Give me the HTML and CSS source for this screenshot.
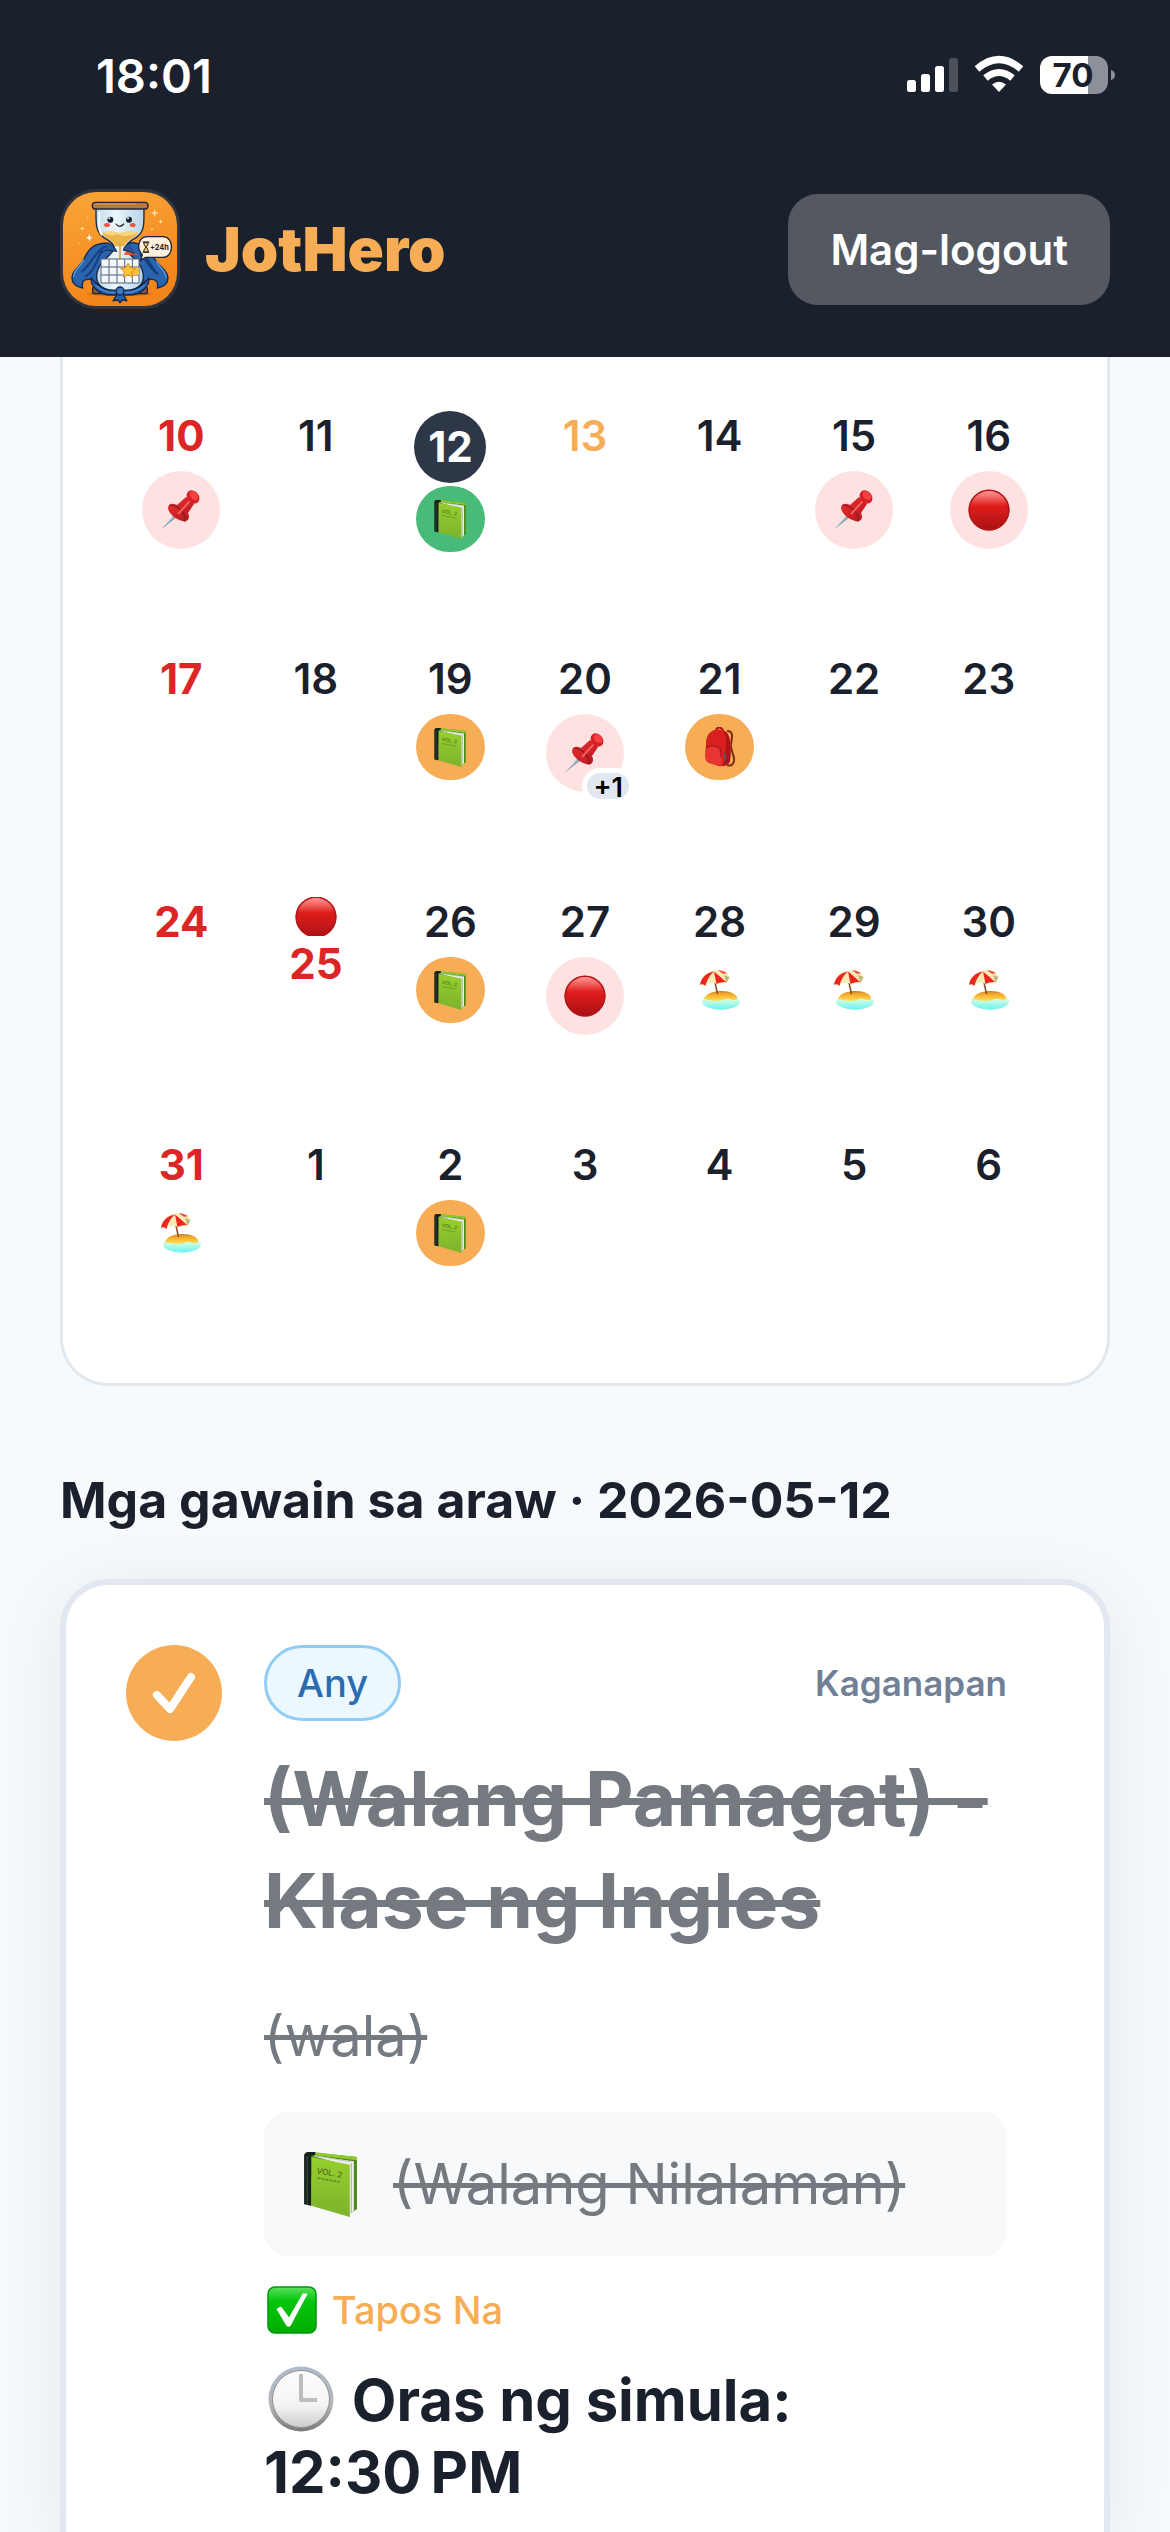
FILE: index.html
```html
<!DOCTYPE html>
<html lang="fil">
<head>
  <meta charset="UTF-8" />
  <meta name="viewport" content="width=device-width, initial-scale=1.0" />
  <title>JotHero</title>
  <link rel="stylesheet" href="styles.css">
</head>
<body>

  <!-- icon sprites -->
  <svg class="sprites" aria-hidden="true">
    <defs>
      <linearGradient id="ballFill" x1="0" y1="0" x2="0" y2="1">
        <stop offset="0" stop-color="#ffa09c"/>
        <stop offset=".16" stop-color="#f4716e"/>
        <stop offset=".4" stop-color="#e01d1b"/>
        <stop offset="1" stop-color="#a81114"/>
      </linearGradient>
      <linearGradient id="coverFill" x1="0" y1="0" x2="0" y2="1">
        <stop offset="0" stop-color="#97cf2d"/>
        <stop offset="1" stop-color="#7cb32c"/>
      </linearGradient>
      <linearGradient id="sandFill" x1="0" y1="0" x2="0" y2="1">
        <stop offset="0" stop-color="#b8823a"/>
        <stop offset=".3" stop-color="#f6a826"/>
        <stop offset="1" stop-color="#ffe05c"/>
      </linearGradient>
      <linearGradient id="seaFill" x1="0" y1="0" x2="0" y2="1">
        <stop offset="0" stop-color="#fffbd8"/>
        <stop offset=".45" stop-color="#c9fbe2"/>
        <stop offset="1" stop-color="#62f4f4"/>
      </linearGradient>
      <linearGradient id="pinFill" x1="0" y1="0" x2="1" y2="1">
        <stop offset="0" stop-color="#f0302f"/>
        <stop offset="1" stop-color="#b3161f"/>
      </linearGradient>
    </defs>

    <symbol id="ball" viewBox="0 0 42 42">
      <circle cx="21" cy="21" r="20.5" fill="url(#ballFill)"/>
      <circle cx="21" cy="21" r="19.8" fill="none" stroke="#b31518" stroke-width="1.4"/>
    </symbol>

    <symbol id="pin" viewBox="0 0 40 40">
      <path d="M0 39.5 13 25l2.500 2.300z" fill="#7d97ad"/>
      <path d="M2 37 14 25.500" stroke="#c6dceb" stroke-width="1"/>
      <path d="M7 17.500c1-4 5-4.500 9-2.500l9-8 8 7-6 9c2 4 1 8-3 8.500C17 31 7 24 7 17.500z" fill="url(#pinFill)"/>
      <path d="M8 15.500c3-1 9 1 13 6 3 4 4 8 2.500 9.800" fill="none" stroke="#8f1820" stroke-width="1.300"/>
      <path d="M17 24 29 11" stroke="#f4605d" stroke-width="2"/>
      <ellipse cx="32" cy="7" rx="5.800" ry="7.200" transform="rotate(-40 32 7)" fill="#d91f26"/>
      <ellipse cx="33" cy="5.500" rx="3.600" ry="5" transform="rotate(-42 33 5.500)" fill="#f2423f"/>
    </symbol>

    <symbol id="book" viewBox="0 0 52 64">
      <path d="M3 0 52 5v51l-7 5L2 20z" fill="#4d8b18"/>
      <path d="M9 0 52 5v3L9 3z" fill="#8cc92b"/>
      <path d="M7 3.500 49 9v49l-5 4V14z" fill="#eceeed"/>
      <path d="M46.500 11v49" stroke="#a9adab" stroke-width="1"/>
      <path d="M10 3.500 46 9.500" stroke="#bbbfbd" stroke-width="1"/>
      <path d="M7 5 45 12.500V64L7 53z" fill="url(#coverFill)"/>
      <path d="M0 3Q1 0 4 0h7v3L7 4v49l-7-1.500z" fill="#15221b"/>
      <path d="M3 4v48" stroke="#41514a" stroke-width="1"/>
      <path d="M13 25.500l22 4" stroke="#5b7f26" stroke-width="1.200" stroke-dasharray="3 1"/>
    </symbol>

    <symbol id="beach" viewBox="0 0 40 40">
      <ellipse cx="21" cy="31.500" rx="19" ry="8.300" fill="url(#seaFill)"/>
      <path d="M4 29c2-6 10-8 18-8s16 3 15 8c-4 3-7-1-11 0-7 3-14 2-22 0z" fill="url(#sandFill)"/>
      <path d="m14 8 3.500 16" stroke="#8d4c22" stroke-width="1.500"/>
      <path d="M0 15C0 7 7 1 15 .5 22-1 29 3 29.500 7l-3 6-9.500 1-4-1.500z" fill="#f7ebb4"/>
      <path d="M0 15C1 8 6 3 14 1.500 9 6 7 10 5.500 16 3.500 14 1 14 0 15z" fill="#ee2420"/>
      <path d="M14 1.500c4 3 8 7 12 10.500-3 0-7 .5-9.500 2z" fill="#ee2420"/>
      <path d="M18 .3c4 0 7 1.500 9 3l-4 .5z" fill="#f0463c"/>
      <path d="m24 5 5.500 2-3 6z" fill="#c3b67c"/>
    </symbol>

    <symbol id="backpack" viewBox="0 0 30 40">
      <path d="M22 4c7 0 5 7 4 13s4 12 3 17-5 5-7 4" fill="none" stroke="#7c2d14" stroke-width="2"/>
      <path d="M11 4c0-4 6-5 7 0" fill="none" stroke="#a51a17" stroke-width="2"/>
      <path d="M1 17C1 7 6 2.500 14 2.500S25 8 26 18l-1 16c-1 4-6 6-12 5L2 34C-1 31 1 23 1 17z" fill="#d8211f"/>
      <path d="M18 4c5 5 3 22 0 35l5-2c3-2 3-12 2-20S23 5 18 4z" fill="#a91518"/>
      <path d="M1 21c5-4 13-2 15 3 1 4 1 10 0 14-5 1-12-1-15-4-1-4-1-9 0-13z" fill="#e63532"/>
      <path d="M1 21c5-4 13-2 15 3v6" fill="none" stroke="#8d1114" stroke-width="1"/>
      <path d="M20 26v8" stroke="#4a5a6c" stroke-width="1.500"/>
    </symbol>
  </svg>

  <header class="top">
    <div class="status-bar">
      <span class="time">18:01</span>
      <svg class="status-icons" viewBox="907 50 209 48" aria-hidden="true">
        <g fill="#fff">
          <rect x="907" y="79" width="9" height="12" rx="2.500"/>
          <rect x="921" y="73" width="9" height="18" rx="2.500"/>
          <rect x="935" y="65" width="9" height="26" rx="2.500"/>
          <rect x="949" y="57" width="9" height="34" rx="2.500" opacity=".22"/>
          <path d="M999 91l-7-7.500q7-5.500 14 0z"/>
        </g>
        <path d="M985.500 77q13.500-11 27 0" fill="none" stroke="#fff" stroke-width="7"/>
        <path d="M977 68q22-19 44 0" fill="none" stroke="#fff" stroke-width="7"/>
        <path d="M1052 55h36v38h-36a12 12 0 0 1-12-12V67a12 12 0 0 1 12-12z" fill="#fff"/>
        <path d="M1088 55h8a12 12 0 0 1 12 12v14a12 12 0 0 1-12 12h-8z" fill="#8d9098"/>
        <path d="M1111 69q4 1 4 5t-4 5z" fill="#8d9098"/>
        <text x="1073" y="86" class="battery-text">70</text>
      </svg>
    </div>
    <div class="app-bar">
      <a href="#" class="brand">
        <svg class="logo" viewBox="30 27 360 360" role="img" aria-label="JotHero">
          <defs>
            <linearGradient id="logoBg" x1="0" y1="0" x2=".3" y2="1">
              <stop offset="0" stop-color="#faa638"/>
              <stop offset="1" stop-color="#f2841b"/>
            </linearGradient>
            <linearGradient id="glass" x1="0" y1="0" x2="1" y2="0">
              <stop offset="0" stop-color="#bcdcec"/>
              <stop offset=".4" stop-color="#eef7fb"/>
              <stop offset="1" stop-color="#b5d4e6"/>
            </linearGradient>
          </defs>
          <rect x="30" y="27" width="360" height="360" rx="108" fill="#2f343f"/>
          <rect x="39" y="36" width="342" height="342" rx="99" fill="url(#logoBg)"/>
          <ellipse cx="208" cy="342" rx="98" ry="6" fill="#d66f10"/>
          <!-- cape -->
          <path d="M178 190c-45-3-62 15-76 47-12 27-36 30-36 57 0 15 12 26 32 30-4-20 3-29 28-25l40 30 45-90z" fill="#2964ad" stroke="#15284f" stroke-width="4"/>
          <path d="M240 188c35-2 58 20 74 49 15 25 39 33 40 57 0 15-12 26-32 30 4-20-4-29-28-25l-44 30-35-90z" fill="#2964ad" stroke="#15284f" stroke-width="4"/>
          <path d="M170 198c-32 9-48 60-76 78m63-65c-18 26-19 59-52 80m164-69c20 15 35 52 57 61m-40-55c15 20 20 38 38 55" stroke="#153e7e" stroke-width="6" fill="none"/>
          <path d="M102 239c-12 24-31 29-31 51m248-46c12 20 29 31 29 49" stroke="#5b9ee2" stroke-width="4" fill="none"/>
          <rect x="128" y="321" width="164" height="20" rx="6" fill="#8b5540" stroke="#1c2536" stroke-width="4"/>
          <!-- hourglass -->
          <path d="M138 85h144c-1 40 5 68-24 88-22 12-31 20-31 32 0 16 53 40 53 84 0 30-26 45-70 45s-70-15-70-45c0-44 53-68 53-84 0-12-9-20-31-32-29-20-23-48-24-88z" fill="url(#glass)" stroke="#1b263c" stroke-width="4"/>
          <path d="M148 95v45c0 10 3 20 8 26" stroke="#fff" stroke-width="5" fill="none"/>
          <path d="M156 158q28-8 55 2 27-12 54-2c-8 15-37 23-42 41h-27c-7-18-36-28-40-41z" fill="#ebb44c"/>
          <path d="M156 158q28-8 55 2 27-12 54-2-30 17-62 5-25 7-47-5z" fill="#f9d57e"/>
          <path d="M210 190v55l-8 11" stroke="#e1a43c" stroke-width="5" fill="none"/>
          <rect x="127" y="67" width="167" height="20" rx="9" fill="#b5774d" stroke="#212533" stroke-width="4"/>
          <path d="M140 72h120" stroke="#d99e70" stroke-width="3"/>
          <!-- face -->
          <circle cx="181" cy="119" r="9" fill="#172136"/>
          <circle cx="237" cy="119" r="9" fill="#172136"/>
          <circle cx="178" cy="115" r="3" fill="#fff"/>
          <circle cx="234" cy="115" r="3" fill="#fff"/>
          <path d="M198 132q11 14 23 0" stroke="#172136" stroke-width="3.500" stroke-linecap="round" fill="none"/>
          <ellipse cx="171" cy="135" rx="9" ry="6" fill="#f25542"/>
          <ellipse cx="248" cy="135" rx="9" ry="6" fill="#f25542"/>
          <!-- calendar on the belly -->
          <path d="M153 237h114v72H153z" fill="#f4f8fb" stroke="#52657a" stroke-width="3"/>
          <path d="M153 261h114M153 285h114M177 237v72M201 237v72M224 237v72M247 237v72" stroke="#52657a" stroke-width="3"/>
          <path d="M237 263h30v22h-30z" fill="#fbb945"/>
          <path d="M221 224l12-17 33 18z" fill="#ed5228"/>
          <path d="M234 250l7 13 15 2-11 11 3 15-14-7-14 7 3-15-11-11 15-2z" fill="#ffc636" stroke="#d9831c" stroke-width="3"/>
          <path d="M178 190c10 7 20 15 22 25-20-5-32-8-43 2m82-28c-10 5-18 13-19 22 15 2 27 5 35 12" fill="#24569a" stroke="#15284f" stroke-width="3"/>
          <path d="M124 294c20 31 54 42 86 34 32 8 66-3 86-34 5 24-24 52-62 51h-48c-38 1-67-27-62-51z" fill="#295fa6" stroke="#15284f" stroke-width="4"/>
          <path d="M136 315c20 19 41 25 61 22m87-22c-20 19-41 25-61 22" stroke="#4d8dd3" stroke-width="4" fill="none"/>
          <path d="M202 341l-12 21 14-2 6 8 7-8 13 2-11-21z" fill="#295fa6" stroke="#15284f" stroke-width="4"/>
          <circle cx="210" cy="333" r="12" fill="#3c79c2" stroke="#15284f" stroke-width="4"/>
          <!-- speech bubble -->
          <path d="M291 170h48c34 0 34 62 0 62h-52l-15 9 5-17c-20-20-10-54 14-54z" fill="#fff1dc" stroke="#1d2535" stroke-width="4"/>
          <path d="M278 186h20M278 217h20M281 187q0 9 7 14-7 6-7 15h14q0-9-6-15 6-6 6-14z" fill="#f3bc5e" stroke="#1d2535" stroke-width="3"/>
          <text x="300" y="209" class="bubble-text">+24h</text>
          <!-- sparkles -->
          <g fill="#ffdda2">
            <path d="M314 87l3 9 9 3-9 3-3 9-3-9-9-3 9-3z"/>
            <path d="M332 117l2 6 6 2-6 2-2 6-2-6-6-2 6-2z"/>
            <path d="M97 138l2 6 6 2-6 2-2 6-2-6-6-2 6-2z"/>
            <path d="M118 162l3 8 7 3-7 3-3 8-3-8-7-3 7-3z" fill="#fff"/>
            <circle cx="306" cy="148" r="3"/>
            <circle cx="88" cy="190" r="2"/>
            <circle cx="113" cy="114" r="2"/>
          </g>
        </svg>
        <span class="brand-name">JotHero</span>
      </a>
      <button type="button" class="logout">Mag-logout</button>
    </div>
  </header>

  <main>
    <section class="calendar">
      <button type="button" class="day holiday"><span class="num">10</span><span class="mark event"><svg class="pin"><use href="#pin"/></svg></span></button>
      <button type="button" class="day"><span class="num">11</span></button>
      <button type="button" class="day selected"><span class="num">12</span><span class="mark done"><svg class="book" viewBox="0 0 52 64"><use href="#book"/><text x="12" y="21" transform="rotate(10 12 21)">VOL. 2</text></svg></span></button>
      <button type="button" class="day today"><span class="num">13</span></button>
      <button type="button" class="day"><span class="num">14</span></button>
      <button type="button" class="day"><span class="num">15</span><span class="mark event"><svg class="pin"><use href="#pin"/></svg></span></button>
      <button type="button" class="day"><span class="num">16</span><span class="mark event"><svg class="ball"><use href="#ball"/></svg></span></button>

      <button type="button" class="day holiday"><span class="num">17</span></button>
      <button type="button" class="day"><span class="num">18</span></button>
      <button type="button" class="day"><span class="num">19</span><span class="mark todo"><svg class="book" viewBox="0 0 52 64"><use href="#book"/><text x="12" y="21" transform="rotate(10 12 21)">VOL. 2</text></svg></span></button>
      <button type="button" class="day"><span class="num">20</span><span class="mark event"><svg class="pin"><use href="#pin"/></svg><span class="more">+1</span></span></button>
      <button type="button" class="day"><span class="num">21</span><span class="mark todo"><svg class="backpack"><use href="#backpack"/></svg></span></button>
      <button type="button" class="day"><span class="num">22</span></button>
      <button type="button" class="day"><span class="num">23</span></button>

      <button type="button" class="day holiday"><span class="num">24</span></button>
      <button type="button" class="day holiday"><span class="flag"><svg class="ball"><use href="#ball"/></svg></span><span class="num">25</span></button>
      <button type="button" class="day"><span class="num">26</span><span class="mark todo"><svg class="book" viewBox="0 0 52 64"><use href="#book"/><text x="12" y="21" transform="rotate(10 12 21)">VOL. 2</text></svg></span></button>
      <button type="button" class="day"><span class="num">27</span><span class="mark event"><svg class="ball"><use href="#ball"/></svg></span></button>
      <button type="button" class="day"><span class="num">28</span><span class="mark"><svg class="beach"><use href="#beach"/></svg></span></button>
      <button type="button" class="day"><span class="num">29</span><span class="mark"><svg class="beach"><use href="#beach"/></svg></span></button>
      <button type="button" class="day"><span class="num">30</span><span class="mark"><svg class="beach"><use href="#beach"/></svg></span></button>

      <button type="button" class="day holiday"><span class="num">31</span><span class="mark"><svg class="beach"><use href="#beach"/></svg></span></button>
      <button type="button" class="day"><span class="num">1</span></button>
      <button type="button" class="day"><span class="num">2</span><span class="mark todo"><svg class="book" viewBox="0 0 52 64"><use href="#book"/><text x="12" y="21" transform="rotate(10 12 21)">VOL. 2</text></svg></span></button>
      <button type="button" class="day"><span class="num">3</span></button>
      <button type="button" class="day"><span class="num">4</span></button>
      <button type="button" class="day"><span class="num">5</span></button>
      <button type="button" class="day"><span class="num">6</span></button>
    </section>

    <h2>Mga gawain sa araw · 2026-05-12</h2>

    <article class="task">
      <label class="check">
        <input type="checkbox" checked aria-label="Tapos Na" />
        <svg viewBox="0 0 96 96" aria-hidden="true"><path d="M31 50l13 14 21-32"/></svg>
      </label>
      <div class="task-body">
        <div class="task-top">
          <span class="tag">Any</span>
          <span class="kind">Kaganapan</span>
        </div>
        <h3><s>(Walang Pamagat) - Klase ng Ingles</s></h3>
        <p class="note"><s>(wala)</s></p>
        <div class="item">
          <svg class="book book-large" viewBox="0 0 52 64"><use href="#book"/><text x="12" y="21" transform="rotate(10 12 21)">VOL. 2</text></svg>
          <s>(Walang Nilalaman)</s>
        </div>
        <div class="state">
          <svg class="tick" viewBox="0 0 50 48" aria-hidden="true">
            <defs>
              <linearGradient id="tickFill" x1="0" y1="0" x2="0" y2="1">
                <stop offset="0" stop-color="#5fe060"/>
                <stop offset=".3" stop-color="#06c60d"/>
                <stop offset="1" stop-color="#00ae00"/>
              </linearGradient>
            </defs>
            <rect x="1" y="1" width="48" height="46" rx="7" fill="url(#tickFill)" stroke="#00970a" stroke-width="1.500"/>
            <path d="M10 23l4-2 8 11L36 8h4L23 40h-3z" fill="#fff" stroke="#fff" stroke-width="1"/>
          </svg>
          Tapos Na
        </div>
        <p class="start">
          <svg class="clock" viewBox="0 0 66 66" aria-hidden="true">
            <defs>
              <linearGradient id="rim" x1="0" y1="0" x2="0" y2="1">
                <stop offset="0" stop-color="#aebccd"/>
                <stop offset=".6" stop-color="#b5b5b5"/>
                <stop offset="1" stop-color="#777"/>
              </linearGradient>
              <linearGradient id="dial" x1="0" y1="0" x2="0" y2="1">
                <stop offset="0" stop-color="#fdfdfd"/>
                <stop offset=".6" stop-color="#f4f4f4"/>
                <stop offset="1" stop-color="#cdcdcd"/>
              </linearGradient>
            </defs>
            <circle cx="33" cy="33" r="32.500" fill="url(#rim)"/>
            <circle cx="33" cy="33" r="28.500" fill="url(#dial)" stroke="#929292" stroke-width="1"/>
            <path d="M33 8v26h16" fill="none" stroke="#bdbdbd" stroke-width="4" stroke-linejoin="round"/>
          </svg>
          Oras ng simula:<br>12:30&#8239;PM
        </p>
      </div>
    </article>
  </main>

</body>
</html>
```
FILE: styles.css
```css
* {
  box-sizing: border-box;
}

body {
  margin: 0;
  min-height: 100vh;
  display: flex;
  flex-direction: column;
  font-family: Inter, "Liberation Sans", sans-serif;
  background-color: #f7fafc;
  color: #1a202c;
}

h2, h3, p {
  margin: 0;
}

button {
  border: none;
  font-family: inherit;
  cursor: pointer;
}

.sprites {
  position: absolute;
  width: 0;
  height: 0;
}

.top {
  background-color: #1a202c;
  color: #fff;
}

.status-bar {
  display: flex;
  align-items: center;
  justify-content: space-between;
  height: 150px;
  padding: 0 54px 0 96px;
}

.time {
  font-size: 47px;
  font-weight: 600;
}

.status-icons {
  width: 209px;
  height: 48px;
}

.battery-text {
  font-size: 33px;
  font-weight: 700;
  text-anchor: middle;
  fill: #1a202c;
}

.app-bar {
  display: flex;
  align-items: center;
  justify-content: space-between;
  padding: 39px 60px 48px;
}

.brand {
  display: flex;
  align-items: center;
  gap: 25px;
  text-decoration: none;
}

.logo {
  width: 120px;
  height: 120px;
}

.bubble-text {
  font-size: 22px;
  font-weight: 700;
  fill: #1d2535;
}

.brand-name {
  font-size: 60px;
  font-weight: 900;
  color: #f6ad55;
}

.logout {
  height: 111px;
  padding: 0 42px;
  border-radius: 30px;
  background-color: #545860;
  color: #fff;
  font-size: 42px;
  font-weight: 600;
}

main {
  flex: 1;
  display: flex;
  flex-direction: column;
  padding: 0 60px;
}

/* calendar */

.calendar {
  display: grid;
  grid-template-columns: repeat(7, 1fr);
  grid-auto-rows: 192px;
  row-gap: 51px;
  padding: 54px 51px 51px;
  border: 3px solid #e2e8f0;
  border-top: none;
  border-radius: 0 0 48px 48px;
  background-color: #fff;
}

.day {
  display: flex;
  flex-direction: column;
  align-items: center;
  justify-content: flex-start;
  padding: 0;
  background: none;
  color: #1a202c;
  font-size: 42px;
  font-weight: 600;
}

.num {
  height: 50px;
  line-height: 50px;
  margin-bottom: 10px;
}

.holiday {
  color: #dc2626;
  font-weight: 700;
}

.today {
  color: #f6ad55;
}

.selected .num {
  width: 72px;
  height: 72px;
  line-height: 72px;
  margin-bottom: 3px;
  border-radius: 50%;
  background-color: #2d3748;
  color: #fff;
  font-weight: 700;
}

.mark {
  position: relative;
  display: flex;
  align-items: center;
  justify-content: center;
  width: 69px;
  height: 66px;
  border-radius: 34px;
}

.done {
  background-color: #48bb78;
}

.todo {
  background-color: #f6ad55;
}

.event {
  width: 78px;
  height: 78px;
  border-radius: 50%;
  background-color: #fee2e2;
}

.more {
  position: absolute;
  right: -10px;
  bottom: -12px;
  height: 36px;
  padding: 0 6px;
  border: 5px solid #fff;
  border-radius: 18px;
  background-color: #e2e8f0;
  color: #000;
  font-size: 27px;
  line-height: 30px;
}

.flag {
  display: flex;
  align-items: center;
  height: 39px;
  margin-bottom: 3px;
  overflow: hidden;
}

.pin, .beach {
  width: 40px;
  height: 40px;
}

.ball {
  flex-shrink: 0;
  width: 42px;
  height: 42px;
}

.book {
  width: 32px;
  height: 39px;
}

.book-large {
  width: 53px;
  height: 65px;
}

.book text {
  font-size: 8px;
  font-weight: 500;
  fill: #4b6d1f;
}

.backpack {
  width: 30px;
  height: 40px;
}

h2 {
  padding: 84px 0 48px;
  font-size: 50px;
  font-weight: 700;
  line-height: 61px;
}

/* task */

.task {
  flex: 1;
  display: flex;
  align-items: flex-start;
  gap: 42px;
  padding: 60px 97px 30px 60px;
  border: 6px solid #e2e8f0;
  border-bottom: none;
  border-radius: 48px 48px 0 0;
  background-color: #fff;
  box-shadow: 0 12px 72px rgba(0, 0, 0, 0.08);
}

.check {
  display: grid;
  width: 96px;
  height: 96px;
}

.check input, .check svg {
  grid-area: 1 / 1;
}

.check input {
  appearance: none;
  margin: 0;
  border-radius: 50%;
  background-color: #f6ad55;
}

.check path {
  fill: none;
  stroke: #fff;
  stroke-width: 8;
  stroke-linecap: round;
  stroke-linejoin: round;
}

.task-body {
  flex: 1;
}

.task-top {
  display: flex;
  align-items: center;
  justify-content: space-between;
  margin-bottom: 27px;
}

.tag {
  padding: 0 30px;
  border: 3px solid #90cdf4;
  border-radius: 38px;
  background-color: #ebf8ff;
  color: #2b6cb0;
  font-size: 38px;
  font-weight: 500;
  line-height: 70px;
}

.kind {
  color: #718096;
  font-size: 35px;
  font-weight: 600;
}

s {
  color: #757980;
}

h3 {
  font-size: 75px;
  font-weight: 700;
  line-height: 102px;
}

.note {
  margin: 38px 0 29px;
  font-size: 56px;
  line-height: 93px;
}

.item {
  display: flex;
  align-items: center;
  gap: 36px;
  height: 144px;
  padding: 0 40px;
  border-radius: 24px;
  background-color: #f8f9fb;
  font-size: 56px;
}

.state {
  display: flex;
  align-items: center;
  gap: 15px;
  margin: 30px 0;
  padding-left: 3px;
  color: #f6ad55;
  font-size: 38px;
  font-weight: 500;
  line-height: 48px;
}

.tick {
  width: 50px;
  height: 48px;
}

.start {
  font-size: 58px;
  font-weight: 700;
  line-height: 72px;
}

.clock {
  width: 66px;
  height: 66px;
  margin: 0 4px;
  vertical-align: -11px;
}
```
